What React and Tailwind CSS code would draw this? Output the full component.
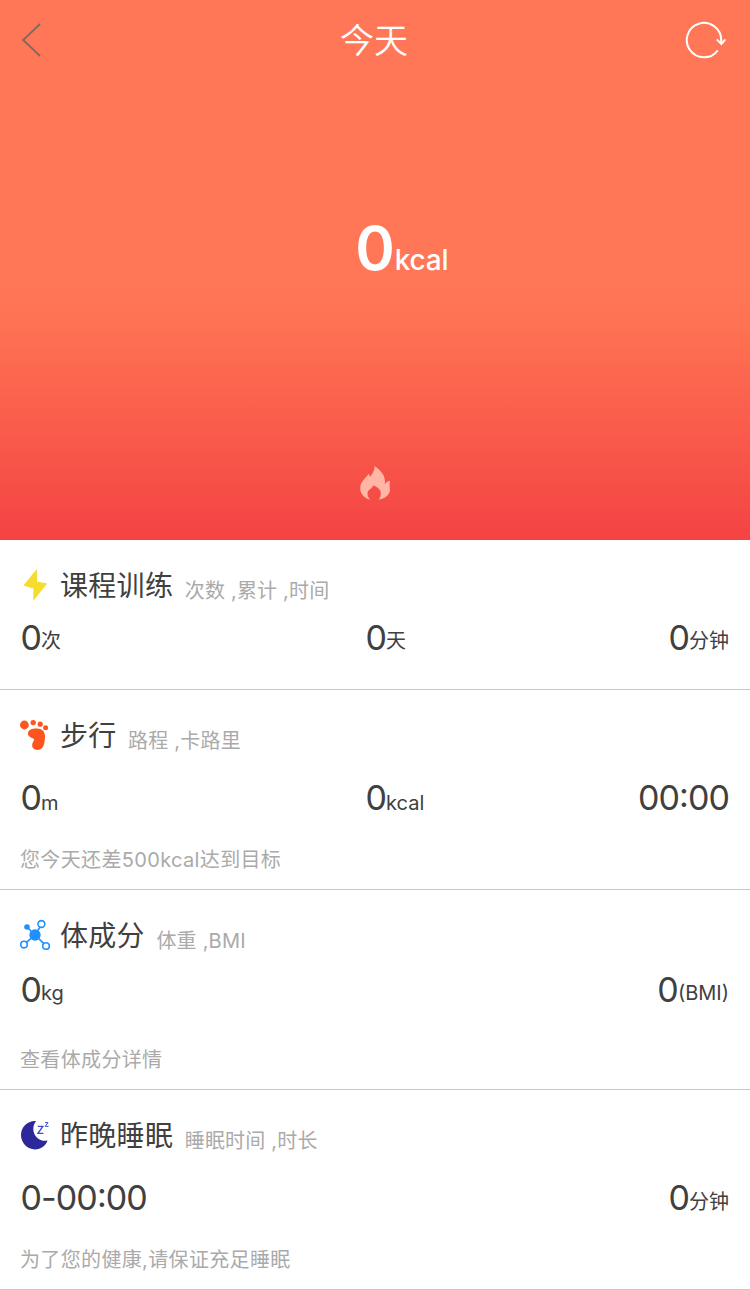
function BackIcon() {
  return (
    <svg width="20" height="36" viewBox="0 0 20 36" fill="none">
      <path d="M19 2 L2.2 18 L19 34" stroke="#7d6a62" strokeWidth="1.8" />
    </svg>
  );
}

function RefreshIcon() {
  return (
    <svg width="44" height="40" viewBox="0 0 44 40" fill="none" stroke="#fff" strokeWidth="2">
      <path d="M34.8 30.4 A17.2 17.2 0 1 1 38.2 20 L38.3 23.4" />
      <path d="M33.8 19.4 L38.4 24 L42.4 19.4" />
    </svg>
  );
}

function FlameIcon() {
  return (
    <svg width="32" height="34" viewBox="0 0 32 34" fill="#ffb6a5">
      <path d="M15.4 0 C16 4.4 13.4 7.6 10.9 11 C10.3 9.8 10 8.8 9.9 7.8 C7 12 1.6 15.4 1.2 21.4 C0.9 27.5 5 31.8 11.2 33.8 C8 30.2 7.6 26.2 10.2 23.8 C12 22.4 13.4 21.8 14 19.4 C18.6 20.6 21.8 23.6 21.8 27.4 C21.8 30 21 32 19.6 33.8 C27.4 32 31 28 30.9 23.4 C30.8 20.4 30.4 18 31 14.8 C29 15.2 27.4 16.2 25.8 18.2 C27.2 10.8 22.6 4.8 15.4 0 Z" />
    </svg>
  );
}

function BoltIcon() {
  return (
    <svg width="30" height="32" viewBox="0 0 30 32">
      <path d="M16.8 0 L3.4 16.6 L13.4 19.4 L13.2 32 L27.2 14.4 L17 12.6 Z" fill="#f6dc2c" />
    </svg>
  );
}

function FootIcon() {
  return (
    <svg width="30" height="32" viewBox="0 0 30 32" fill="#fd551e">
      <circle cx="4.4" cy="6" r="4.4" />
      <circle cx="13.2" cy="3.6" r="2.7" />
      <circle cx="20.2" cy="5.2" r="2.6" />
      <circle cx="25.6" cy="8.8" r="2.5" />
      <path d="M8 14.2 C8.2 10.8 12 9.4 16.6 9.4 C21.8 9.2 25 12 25 17.4 C25 25.6 22.6 31 17.4 31 C14 31 11.8 29 12.2 25.6 C12.5 22.8 14.6 21.8 13.8 20 C12.2 18.6 7.8 18.2 8 14.2 Z" />
    </svg>
  );
}

function BodyIcon() {
  return (
    <svg width="30" height="32" viewBox="0 0 30 32" fill="none" stroke="#1e90ff" strokeWidth="1.6">
      <path d="M15 16 L7 8 M15 16 L20.2 7.8 M15 16 L6.4 23.4 M15 16 L23.6 24.4" />
      <circle cx="15" cy="16" r="4.9" fill="#1e90ff" />
      <circle cx="7" cy="8" r="2" fill="#1e90ff" />
      <circle cx="21.4" cy="5" r="3.4" />
      <circle cx="4" cy="25.6" r="3.3" />
      <circle cx="26" cy="27" r="3.3" />
    </svg>
  );
}

function SleepIcon() {
  return (
    <svg width="30" height="32" viewBox="0 0 30 32">
      <path d="M16 2 C7.4 1.4 1 8.2 1 16 C1 24 7.4 30.4 15 30.4 C20.8 30.4 25.6 26.8 27.6 21.4 C25 22.2 21 22 18 19.4 C12.6 15.4 11.8 7.4 16 2 Z" fill="#2c289a" />
      <path d="M17.8 7.4 H22.8 L18 14.4 H23.4" fill="none" stroke="#3f4fc4" strokeWidth="1.4" />
      <path d="M25 3.6 H28 L25.2 7.4 H28.6" fill="none" stroke="#3f4fc4" strokeWidth="1" />
    </svg>
  );
}

function Value({ value, unit = '', lift = '' }) {
  const [head, tail] = value.split(':');
  return (
    <div className="whitespace-nowrap text-[34px] leading-[50px] tracking-[-0.9px] text-[#404040]">
      {head}
      {tail && <span className="relative -top-[3px]">:</span>}
      {tail}
      {unit && <span className={`${lift} relative text-[20px] tracking-normal`}>{unit}</span>}
    </div>
  );
}

const sections = [
  {
    icon: <BoltIcon />,
    title: '课程训练',
    sub: '次数 ,累计 ,时间',
    size: 'h-[150px]',
    gap: 'mt-[3px]',
    values: [['0', '次', '-top-[2px]'], ['0', '天', '-top-[2px]'], ['0', '分钟', '-top-[2px]']],
  },
  {
    icon: <FootIcon />,
    title: '步行',
    sub: '路程 ,卡路里',
    size: 'h-[200px]',
    gap: 'mt-[13px]',
    values: [['0', 'm'], ['0', 'kcal'], ['00:00']],
    note: '您今天还差500kcal达到目标',
  },
  {
    icon: <BodyIcon />,
    title: '体成分',
    sub: '体重 ,BMI',
    size: 'h-[200px]',
    gap: 'mt-[5px]',
    values: [['0', 'kg', '-top-[2px]'], [''], ['0', '(BMI)', '-top-[2px]']],
    note: '查看体成分详情',
  },
  {
    icon: <SleepIcon />,
    title: '昨晚睡眠',
    sub: '睡眠时间 ,时长',
    size: 'h-[200px]',
    gap: 'mt-[13px]',
    values: [['0-00:00'], [''], ['0', '分钟', '-top-px']],
    note: '为了您的健康,请保证充足睡眠',
  },
];

function Section({ icon, title, sub, size, gap, values, note }) {
  return (
    <section className={`${size} flex flex-col border-b border-[#c8c8c8] pt-5 pr-[21px] pl-5`}>
      <div className="flex h-[50px] items-center">
        {icon}
        <h2 className="ml-[10px] pt-[2px] text-[28px] leading-[50px] tracking-[0.3px] text-[#404040]">{title}</h2>
        <span className="ml-[11.5px] pt-[13px] text-[20px] leading-[41px] tracking-[0.2px] text-[#aaaaaa]">{sub}</span>
      </div>
      <div className={`${gap} grid grid-cols-[345px_1fr_auto] pl-[0.5px]`}>
        {values.map(([value, unit, lift], i) => (
          <Value key={i} value={value} unit={unit} lift={lift} />
        ))}
      </div>
      {note && <p className="mt-auto mb-[14px] text-[20px] leading-[30px] tracking-[0.35px] text-[#aaaaaa]">{note}</p>}
    </section>
  );
}

export default function App() {
  return (
    <div className="h-[1290px] w-[750px] overflow-hidden bg-white font-[Inter,'Noto_Sans_CJK_SC',sans-serif]">
      <header className="flex h-[540px] flex-col items-center bg-[linear-gradient(180deg,#ff7757_0px,#ff7757_280px,#ff7353_320px,#f44343_540px)] text-white">
        <div className="flex h-20 w-full items-center justify-between pr-[23px] pl-[21px]">
          <div className="w-[44px]"><BackIcon /></div>
          <h1 className="pt-[2px] text-[34px] leading-[78px] font-[350]">今天</h1>
          <RefreshIcon />
        </div>
        <div className="relative mt-[128px] text-[60px] leading-[80px] font-semibold">
          0
          <span className="absolute bottom-[-1px] left-full text-[28px] leading-[58px] font-medium tracking-[-0.2px]">kcal</span>
        </div>
        <div className="mt-auto mb-[40px]"><FlameIcon /></div>
      </header>
      {sections.map((s) => (
        <Section key={s.title} {...s} />
      ))}
    </div>
  );
}
